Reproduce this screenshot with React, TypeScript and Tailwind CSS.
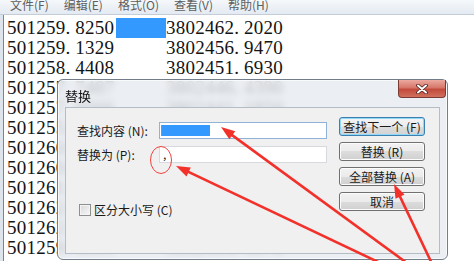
import React from 'react';

const rows: [string, string][] = [
  ['501259.8250', '3802462.2020'],
  ['501259.1329', '3802456.9470'],
  ['501258.4408', '3802451.6930'],
  ['501257.7487', '3802446.4390'],
  ['501257.0566', '3802441.1850'],
  ['501255.3645', '3802435.9310'],
  ['501260.1732', '3802430.6770'],
  ['501260.8653', '3802425.4230'],
  ['501261.5574', '3802420.1690'],
  ['501262.2495', '3802414.9150'],
  ['501262.9416', '3802409.6610'],
  ['501259.4811', '3802404.4070'],
];

const menus = ['文件(F)', '编辑(E)', '格式(O)', '查看(V)', '帮助(H)'];

// 等宽显示：每个字符占一个固定格子
function Mono({ text }: { text: string }) {
  return (
    <>
      {text.split('').map((c, i) => (
        <span key={i} className="inline-block w-[9.75px]">
          {c}
        </span>
      ))}
    </>
  );
}

type Pt = { x: number; y: number };

function Arrow({ tip, tail }: { tip: Pt; tail: Pt }) {
  const dx = tip.x - tail.x;
  const dy = tip.y - tail.y;
  const L = Math.hypot(dx, dy);
  const ux = dx / L;
  const uy = dy / L;
  const len = 14;
  const w = 5;
  const bx = tip.x - ux * len;
  const by = tip.y - uy * len;
  const px = -uy;
  const py = ux;
  const pts = `${tip.x},${tip.y} ${bx + px * w},${by + py * w} ${bx - px * w},${by - py * w}`;
  return (
    <g>
      <line x1={tail.x} y1={tail.y} x2={bx + ux * 2} y2={by + uy * 2} stroke="#f2312b" strokeWidth={2.6} />
      <polygon points={pts} fill="#f2312b" />
    </g>
  );
}

function DlgButton({ label, focused }: { label: string; focused?: boolean }) {
  return (
    <div
      className={
        focused
          ? 'h-[19px] w-[86px] flex items-center justify-center rounded-[3px] border border-[#3c7fb1] shadow-[inset_0_0_0_1px_#8fd8f8] bg-[linear-gradient(#f4f4f4,#ececec_50%,#dedede_50%,#d2d2d2)] text-[12px] leading-none text-[#1a1a1a]'
          : 'h-[19px] w-[86px] flex items-center justify-center rounded-[3px] border border-[#707070] shadow-[inset_0_0_0_1px_#fcfcfc] bg-[linear-gradient(#f2f2f2,#ebebeb_50%,#dddddd_50%,#cfcfcf)] text-[12px] leading-none text-[#1a1a1a]'
      }
    >
      {label}
    </div>
  );
}

export default function App() {
  return (
    <div className="relative w-[474px] h-[261px] overflow-hidden bg-[#dde4ec] font-['Noto_Sans_CJK_SC',sans-serif]">
      {/* 菜单栏 */}
      <div className="h-[15px] flex gap-[15px] pl-[10px] bg-[linear-gradient(#f5f8fb,#e4eaf2)] border-b border-[#c3ccd7] overflow-hidden">
        {menus.map(m => (
          <span key={m} className="text-[12px] leading-[12px] -mt-[1px] text-[#5e5e5e] whitespace-nowrap">
            {m}
          </span>
        ))}
      </div>

      {/* 文本区 */}
      <div className="ml-[3px] h-[246px] border-l border-[#7d848c] bg-white pt-[3px] pl-[3px] font-['Liberation_Serif',serif] text-[19px] text-[#141414]">
        {rows.map(([a, b], i) => (
          <div key={i} className="flex h-[20px] leading-[20px] whitespace-nowrap">
            <div className="w-[109px]">
              <Mono text={a} />
            </div>
            <div className={i === 0 ? 'w-[50px] bg-[#3399ff]' : 'w-[50px]'} />
            <div>
              <Mono text={b} />
            </div>
          </div>
        ))}
      </div>

      {/* 替换 对话框 */}
      <div className="absolute left-[57px] top-[79px] w-[391px] h-[181px] rounded-[6px] border border-[#737d89] bg-[#e6eaef]/80 backdrop-blur-[3px] shadow-[inset_0_0_0_1px_rgba(255,255,255,0.7)] flex flex-col">
        <div className="relative h-[27px] shrink-0">
          <span className="absolute left-[7px] top-[9px] text-[13px] leading-[13px] text-[#111]">替换</span>
          <div className="absolute right-[1px] top-0 w-[48px] h-[18px] rounded-b-[4px] border border-[#7c3a33] border-t-0 bg-[linear-gradient(#ecaaa0,#d7766a_45%,#c24a3b_55%,#d1705e)] flex items-center justify-center">
            <svg width="12" height="10" viewBox="0 0 12 10">
              <path d="M2 1.5 L10 8.5 M10 1.5 L2 8.5" stroke="#4a1f1a" strokeWidth="3.6" strokeLinecap="round" />
              <path d="M2 1.5 L10 8.5 M10 1.5 L2 8.5" stroke="#ffffff" strokeWidth="2" strokeLinecap="round" />
            </svg>
          </div>
        </div>

        <div className="mx-[7px] h-[147px] border border-[#b4bcc6] bg-[#f0f0f0] flex text-[12px] text-[#1a1a1a]">
          <div className="flex-1 pl-[11px] pt-[14px]">
            <div className="flex items-center h-[17px]">
              <span className="w-[82px] leading-none whitespace-nowrap">查找内容 (N):</span>
              <div className="relative w-[168px] h-[17px] border border-[#8fb2d6] bg-white">
                <div className="absolute left-[1px] top-[2px] w-[1px] h-[11px] bg-[#d9822b]" />
                <div className="absolute left-[2px] top-[2px] w-[48px] h-[11px] bg-[#3399ff]" />
              </div>
            </div>
            <div className="flex items-center h-[17px] mt-[7px]">
              <span className="w-[82px] leading-none whitespace-nowrap">替换为 (P):</span>
              <div className="w-[168px] h-[17px] border border-[#d6dadf] bg-white pl-[3px] text-[12px] leading-[13px]">,</div>
            </div>
            <div className="flex items-center mt-[41px] ml-[2px]">
              <div className="w-[12px] h-[12px] border border-[#8e8f8f] bg-[linear-gradient(135deg,#d8d8d8,#f8f8f8)] shadow-[inset_0_0_0_1px_#f4f4f4]" />
              <span className="ml-[3px] leading-none whitespace-nowrap">区分大小写 (C)</span>
            </div>
          </div>
          <div className="w-[100px] pt-[9px] flex flex-col gap-[6px]">
            <DlgButton label="查找下一个 (F)" focused />
            <DlgButton label="替换 (R)" />
            <DlgButton label="全部替换 (A)" />
            <DlgButton label="取消" />
          </div>
        </div>
      </div>

      {/* 红色标注 */}
      <svg className="absolute inset-0 pointer-events-none" width="474" height="261" viewBox="0 0 474 261">
        <ellipse cx="161" cy="160" rx="10.5" ry="13.5" fill="none" stroke="#f0413b" strokeWidth="1" />
        <Arrow tip={{ x: 221, y: 127 }} tail={{ x: 411, y: 266 }} />
        <Arrow tip={{ x: 176, y: 166 }} tail={{ x: 395, y: 270 }} />
        <Arrow tip={{ x: 394, y: 184 }} tail={{ x: 435, y: 270 }} />
      </svg>
    </div>
  );
}
